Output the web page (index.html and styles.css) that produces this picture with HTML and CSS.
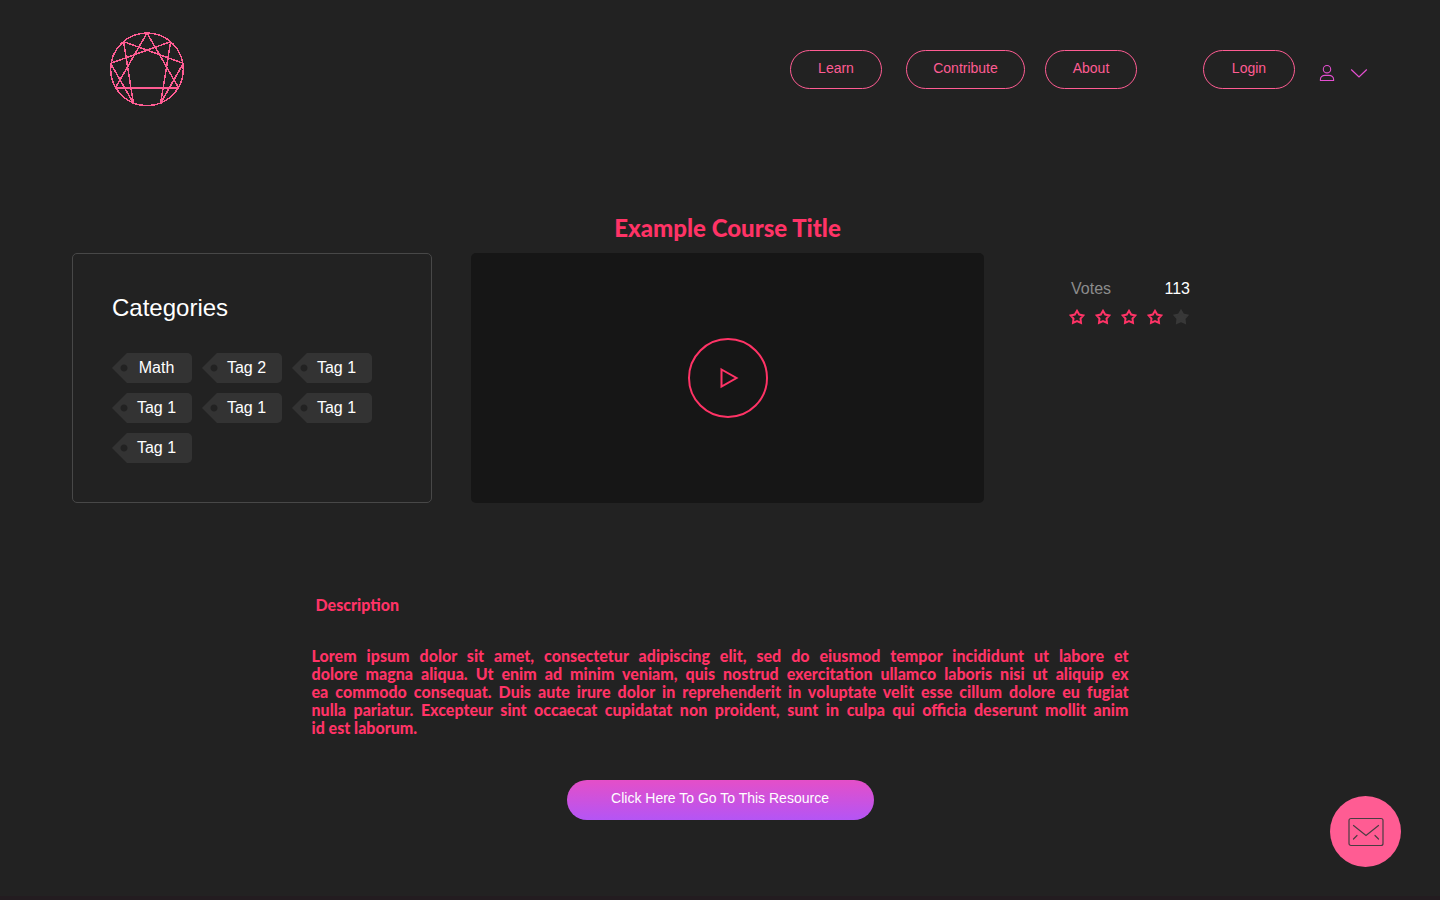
FILE: index.html
```html
<!DOCTYPE html>
<html lang="en">
<head>
<meta charset="utf-8">
<meta name="viewport" content="width=device-width, initial-scale=1">
<title>Example Course Title</title>
<link rel="stylesheet" href="styles.css">
</head>
<body>
<div class="page">
  <header class="header">
    <a class="logo" href="#" aria-label="Home">
      <svg viewBox="27 27 228 228" width="76" height="76" fill="none" stroke="currentColor" stroke-width="4.500" shape-rendering="crispEdges">
        <circle cx="141" cy="142" r="109"/>
        <path d="M46 198L141 33L236 198"/>
        <path d="M46 198H236" stroke-width="6"/>
        <path d="M212 59L182 243L250 124L71 59L100 243L32 124Z"/>
      </svg>
    </a>
    <nav class="nav">
      <a class="pill" href="#">Learn</a>
      <a class="pill pill-wide" href="#">Contribute</a>
      <a class="pill" href="#">About</a>
    </nav>
    <div class="account">
      <a class="pill" href="#">Login</a>
      <button class="icon-button" type="button" aria-label="Profile">
        <svg viewBox="0 0 16 18" width="16" height="18" fill="none" stroke="currentColor" stroke-width="1.1">
          <circle cx="8" cy="5.2" r="3.7"/>
          <path d="M1.4 16.5V15.6C1.4 12.9 3.5 11.4 6 11.4H10C12.500 11.400 14.600 12.900 14.600 15.600V16.500Z"/>
        </svg>
      </button>
      <button class="icon-button" type="button" aria-label="Open menu">
        <svg viewBox="0 0 18 18" width="18" height="18" fill="none" stroke="currentColor" stroke-width="1.2">
          <path d="M1.200 5.500L9 13L16.800 5.500"/>
        </svg>
      </button>
    </div>
  </header>

  <main>
    <div class="course">
      <h1 class="course-title">Example Course Title</h1>
      <section class="categories">
        <h2 class="categories-title">Categories</h2>
        <ul class="tags">
          <li><a class="tag" href="#">Math</a></li>
          <li><a class="tag" href="#">Tag 2</a></li>
          <li><a class="tag" href="#">Tag 1</a></li>
          <li><a class="tag" href="#">Tag 1</a></li>
          <li><a class="tag" href="#">Tag 1</a></li>
          <li><a class="tag" href="#">Tag 1</a></li>
          <li><a class="tag" href="#">Tag 1</a></li>
        </ul>
      </section>
      <div class="video">
        <button class="play" type="button" aria-label="Play video">
          <svg viewBox="0 0 22 22" width="22" height="22" fill="none" stroke="currentColor" stroke-width="2">
            <path d="M4.500 2.500L19.500 11L4.500 19.500Z"/>
          </svg>
        </button>
      </div>
      <aside class="rating">
        <div class="votes"><span class="votes-label">Votes</span><span>113</span></div>
        <div class="stars" role="img" aria-label="4 out of 5 stars">
          <svg class="star" viewBox="0 0 16 16"><path d="M8 1.800L10.200 5.500L14.400 6.400L11.500 9.600L12 13.900L8 12.200L4 13.900L4.500 9.600L1.600 6.400L5.800 5.500Z"/></svg>
          <svg class="star" viewBox="0 0 16 16"><path d="M8 1.800L10.200 5.500L14.400 6.400L11.500 9.600L12 13.900L8 12.200L4 13.900L4.500 9.600L1.600 6.400L5.800 5.500Z"/></svg>
          <svg class="star" viewBox="0 0 16 16"><path d="M8 1.800L10.200 5.500L14.400 6.400L11.500 9.600L12 13.900L8 12.200L4 13.900L4.500 9.600L1.600 6.400L5.800 5.500Z"/></svg>
          <svg class="star" viewBox="0 0 16 16"><path d="M8 1.800L10.200 5.500L14.400 6.400L11.500 9.600L12 13.900L8 12.200L4 13.900L4.500 9.600L1.600 6.400L5.800 5.500Z"/></svg>
          <svg class="star star-empty" viewBox="0 0 16 16"><path d="M8 1.800L10.200 5.500L14.400 6.400L11.500 9.600L12 13.900L8 12.200L4 13.900L4.500 9.600L1.600 6.400L5.800 5.500Z"/></svg>
        </div>
      </aside>
    </div>

    <section class="description">
      <h2 class="description-title">Description</h2>
      <p class="description-text">
        <span class="line">Lorem ipsum dolor sit amet, consectetur adipiscing elit, sed do eiusmod tempor incididunt ut labore et</span>
        <span class="line">dolore magna aliqua. Ut enim ad minim veniam, quis nostrud exercitation ullamco laboris nisi ut aliquip ex</span>
        <span class="line">ea commodo consequat. Duis aute irure dolor in reprehenderit in voluptate velit esse cillum dolore eu fugiat</span>
        <span class="line">nulla pariatur. Excepteur sint occaecat cupidatat non proident, sunt in culpa qui officia deserunt mollit anim</span>
        <span class="line">id est laborum.</span>
      </p>
      <a class="resource-link" href="#">Click Here To Go To This Resource</a>
    </section>
  </main>

  <button class="mail" type="button" aria-label="Contact us">
    <svg viewBox="0 0 36 30" width="36" height="30" fill="none" stroke="currentColor" stroke-width="1.2" stroke-linecap="round">
      <rect x="1" y="1.500" width="34" height="27" rx="2"/>
      <path d="M5.500 8.500L18 18.500L30.500 8.500M5.500 22L9 18.500M30.500 22L27 18.500"/>
    </svg>
  </button>
</div>
</body>
</html>
```
FILE: styles.css
```css
* {
  box-sizing: border-box;
}

body {
  margin: 0;
  background: #222;
  color: #fff;
  font-family: "Liberation Sans", Arial, sans-serif;
  font-size: 16px;
}

a {
  color: inherit;
  text-decoration: none;
}

button {
  padding: 0;
  border: 0;
  background: none;
  font: inherit;
  cursor: pointer;
}

svg {
  display: block;
}

h1, h2, p, ul {
  margin: 0;
  padding: 0;
}

.page {
  min-height: 100vh;
  border-bottom: 4px solid #231c20;
}

.header {
  display: flex;
  align-items: center;
  padding: 31px 72px 0 109px;
  color: #ff5c93;
}

.nav {
  display: flex;
  gap: 20px;
  margin-left: auto;
}

.account {
  display: flex;
  align-items: center;
  margin-left: 66px;
}

.pill {
  display: flex;
  justify-content: center;
  width: 92px;
  height: 39px;
  border: 1px solid #ff5c93;
  border-radius: 20px;
  font-size: 14px;
  line-height: 35px;
}

.pill-wide {
  width: 119px;
  margin-left: 4px;
}

.icon-button {
  margin: 8px 0 0 15px;
  color: #e44fd0;
}

.pill + .icon-button {
  margin-left: 24px;
}

.course {
  display: grid;
  grid-template-columns: 360px 513px 1fr;
  column-gap: 39px;
  padding: 106px 72px 0;
}

.course-title {
  grid-column: 2;
  margin-bottom: 10px;
  color: #ff3366;
  font-family: Lato, sans-serif;
  font-size: 24px;
  font-weight: 900;
  line-height: 30px;
  text-align: center;
}

.categories {
  grid-column: 1;
  padding: 39px;
  border: 1px solid #484848;
  border-radius: 5px;
}

.categories-title {
  margin-bottom: 30px;
  font-size: 24px;
  font-weight: 400;
  line-height: 30px;
}

.tags {
  display: grid;
  grid-template-columns: repeat(3, 80px);
  gap: 10px;
  list-style: none;
}

.tag {
  display: block;
  height: 30px;
  padding-left: 9px;
  border-radius: 0 5px 5px 0;
  background: radial-gradient(circle at 12px 15px, #222 3px, #333 4px);
  clip-path: polygon(0 50%, 15px 0, 100% 0, 100% 100%, 15px 100%);
  line-height: 30px;
  text-align: center;
}

.video {
  display: grid;
  place-items: center;
  border-radius: 5px;
  background: #161616;
}

.play {
  display: grid;
  place-items: center;
  width: 80px;
  height: 80px;
  border: 2px solid #ff3366;
  border-radius: 50%;
  color: #ff3366;
}

.rating {
  width: 121px;
  margin: 26px 0 0 46px;
}

.votes {
  display: flex;
  justify-content: space-between;
  padding-left: 2px;
  line-height: 20px;
}

.votes-label {
  color: #8c8c8c;
}

.stars {
  display: flex;
  gap: 10px;
  margin-top: 10px;
}

.star {
  width: 16px;
  height: 16px;
  fill: none;
  stroke: #ff3366;
  stroke-width: 2;
}

.star-empty {
  fill: #383838;
  stroke: #383838;
}

.description {
  display: flex;
  flex-direction: column;
  max-width: 817px;
  margin: 93px auto 0;
  color: #ff3366;
  font-family: Lato, sans-serif;
  font-size: 16px;
  font-weight: 900;
  line-height: 18px;
}

.description-title {
  margin: 0 0 33px 4px;
  font-size: 16px;
  font-weight: 900;
}

.line {
  display: block;
  text-align: justify;
  text-align-last: justify;
}

.line:last-child {
  text-align-last: left;
}

.resource-link {
  align-self: center;
  width: 307px;
  height: 40px;
  margin-top: 43px;
  border-radius: 20px;
  background: linear-gradient(#e44fc8, #b455f5);
  color: #fff;
  font-family: "Liberation Sans", Arial, sans-serif;
  font-size: 14px;
  font-weight: 400;
  line-height: 37px;
  text-align: center;
}

.mail {
  position: fixed;
  right: 39px;
  bottom: 33px;
  display: grid;
  place-items: center;
  width: 71px;
  height: 71px;
  border-radius: 50%;
  background: #ff5c93;
  color: #4a3d42;
}
```
